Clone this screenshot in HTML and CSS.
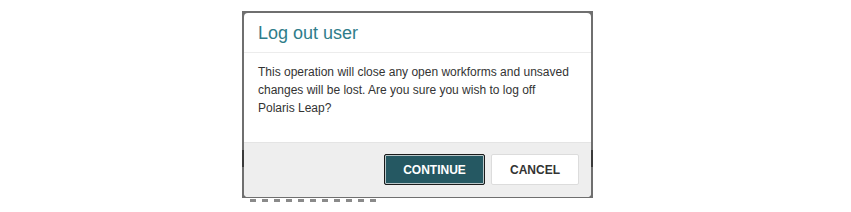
FILE: index.html
```html
<!DOCTYPE html>
<html>
<head>
<meta charset="utf-8">
<link rel="stylesheet" href="styles.css">
</head>
<body>
<div class="stage">
  <div class="backdrop">
    <div class="dialog">
      <div class="dialog-header">
        <h4 class="dialog-title">Log out user</h4>
      </div>
      <div class="dialog-body">
        This operation will close any open workforms and unsaved changes will be lost. Are you sure you wish to log off Polaris Leap?
      </div>
      <div class="dialog-footer">
        <button class="btn btn-primary">CONTINUE</button>
        <button class="btn btn-default">CANCEL</button>
      </div>
    </div>
    <div class="behind"></div>
  </div>
</div>
</body>
</html>
```

FILE: styles.css
```css
html, body {
  margin: 0;
  padding: 0;
  background: #fff;
  width: 851px;
  height: 212px;
  overflow: hidden;
  font-family: "Liberation Sans", Arial, sans-serif;
}

.stage {
  padding-top: 11px;
  padding-left: 242px;
}

.backdrop {
  width: 351px;
  height: 201px;
  background: linear-gradient(to bottom, #6f6f6f 0, #6f6f6f 139px, #3a3a3a 139px, #3a3a3a 156px, #6f6f6f 156px);
  box-sizing: border-box;
  padding: 2px 2px 0 2px;
  overflow: hidden;
}

.dialog {
  background: #fff;
  border-radius: 4px;
  overflow: hidden;
  height: 184px;
  display: flex;
  flex-direction: column;
}

.dialog-header {
  padding: 10px 15px 9px 14px;
  border-bottom: 1px solid #ececec;
}

.dialog-title {
  margin: 0;
  font-size: 18px;
  font-weight: normal;
  line-height: 20px;
  color: #2f7d8a;
}

.dialog-body {
  padding: 10px 18px 0 14px;
  font-size: 12px;
  line-height: 18px;
  color: #333;
  flex: 1;
}

.dialog-footer {
  background: #eeeeee;
  border-top: 1px solid #e4e4e4;
  height: 55px;
  box-sizing: border-box;
  display: flex;
  justify-content: flex-end;
  align-items: center;
  gap: 6px;
  padding: 0 12px 1px 0;
}

.btn {
  height: 31px;
  box-sizing: border-box;
  font-family: "Liberation Sans", Arial, sans-serif;
  font-size: 12px;
  font-weight: bold;
  border-radius: 2px;
  padding: 0;
  cursor: pointer;
}

.btn-primary {
  width: 101px;
  background: #255862;
  color: #fff;
  border: 1px solid #1a1a1a;
  box-shadow: inset 0 0 0 1px #b9c6c8;
}

.btn-default {
  width: 88px;
  background: #fff;
  color: #333;
  border: 1px solid #dcdcdc;
}

.behind {
  margin: 1px -2px 0 -2px;
  height: 14px;
  background: repeating-linear-gradient(to right, #fff 0, #fff 4px, #8a8a8a 4px, #8a8a8a 10px, #fff 10px, #fff 12px) 4px 1px / 136px 3px no-repeat, #fff;
}
```
